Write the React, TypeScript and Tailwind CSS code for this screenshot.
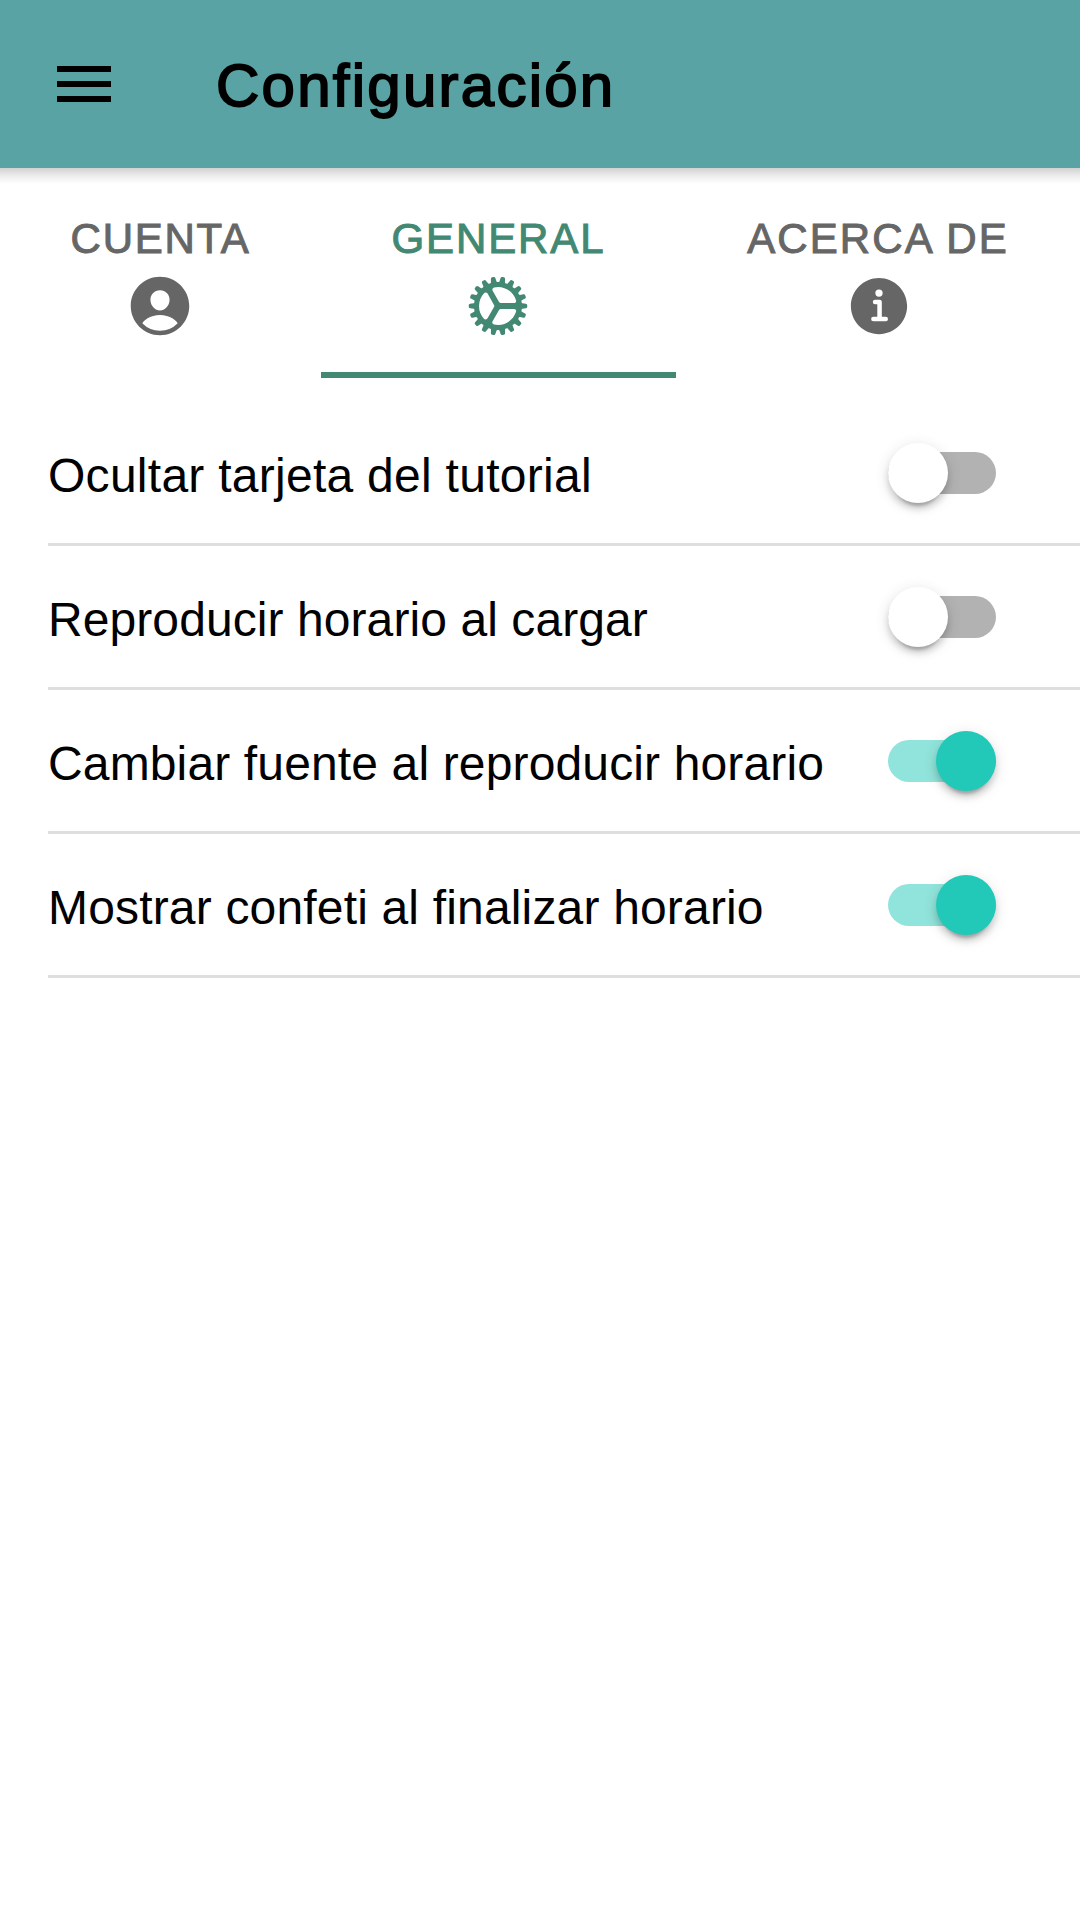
import { IoCog, IoInformationCircle, IoPersonCircle } from "react-icons/io5";
import type { IconType } from "react-icons";

type Tab = { label: string; icon: IconType; width: string; tracking: string; nudge: string; active?: boolean };

const tabs: Tab[] = [
  { label: "CUENTA", icon: IoPersonCircle, width: "w-[321px]", tracking: "tracking-[1.7px]", nudge: "mr-px" },
  { label: "GENERAL", icon: IoCog, width: "w-[355px]", tracking: "tracking-[1.88px]", nudge: "mr-[2px]", active: true },
  { label: "ACERCA DE", icon: IoInformationCircle, width: "w-[404px]", tracking: "tracking-[2.1px]", nudge: "ml-[2px]" },
];

const settings = [
  { label: "Ocultar tarjeta del tutorial", on: false, tracking: "tracking-[0.27px]" },
  { label: "Reproducir horario al cargar", on: false, tracking: "tracking-[0.08px]" },
  { label: "Cambiar fuente al reproducir horario", on: true, tracking: "tracking-[0.14px]" },
  { label: "Mostrar confeti al finalizar horario", on: true, tracking: "tracking-[0.17px]" },
];

function Toggle({ on, label }: { on: boolean; label: string }) {
  return (
    <button
      role="switch"
      aria-checked={on}
      aria-label={label}
      className={`flex h-[42px] w-[108px] items-center rounded-full ${on ? "justify-end bg-[#91e4db]" : "justify-start bg-[#b2b2b2]"}`}
    >
      <span
        className={`size-[60px] shrink-0 rounded-full shadow-[0_9px_3px_-6px_rgba(0,0,0,0.2),0_6px_6px_0_rgba(0,0,0,0.14),0_3px_15px_0_rgba(0,0,0,0.12)] ${on ? "bg-[#22c9b8]" : "bg-white"}`}
      />
    </button>
  );
}

export default function App() {
  return (
    <div className="min-h-[1920px] w-[1080px] overflow-hidden bg-white font-['Liberation_Sans',Arial,sans-serif] text-black">
      <header className="relative flex h-[168px] items-center bg-[#5aa3a5] pl-[57px]">
        <button aria-label="Menú" className="flex w-[54px] flex-col gap-[9px]">
          <span className="h-[6px] bg-black" />
          <span className="h-[6px] bg-black" />
          <span className="h-[6px] bg-black" />
        </button>
        <h1 className="ml-[105px] pt-[4px] text-[60px] leading-[72px] tracking-[2.25px] [-webkit-text-stroke:1.8px_black]">
          Configuración
        </h1>
        <div className="absolute inset-x-0 top-full h-[16px] bg-linear-to-b from-black/18 via-black/7 to-transparent" />
      </header>

      <nav className="flex h-[210px]">
        {tabs.map(({ label, icon: Icon, width, tracking, nudge, active }) => (
          <button
            key={label}
            className={`flex flex-col items-center border-b-6 pt-[47px] ${width} ${active ? "border-[#428872] text-[#428872]" : "border-transparent text-[#666666]"}`}
          >
            <span className={`text-[42px] leading-[48px] whitespace-nowrap [-webkit-text-stroke:1px_currentColor] ${tracking}`}>
              {label}
            </span>
            <Icon className={`mt-[7px] size-[72px] shrink-0 ${nudge}`} />
          </button>
        ))}
      </nav>

      <ul className="pt-6">
        {settings.map(({ label, on, tracking }) => (
          <li key={label} className="ml-[48px] flex h-[144px] items-center justify-between border-b-3 border-[#dedede] pr-[84px]">
            <span className={`pt-[7px] text-[48px] leading-[60px] whitespace-nowrap ${tracking}`}>{label}</span>
            <Toggle on={on} label={label} />
          </li>
        ))}
      </ul>
    </div>
  );
}
